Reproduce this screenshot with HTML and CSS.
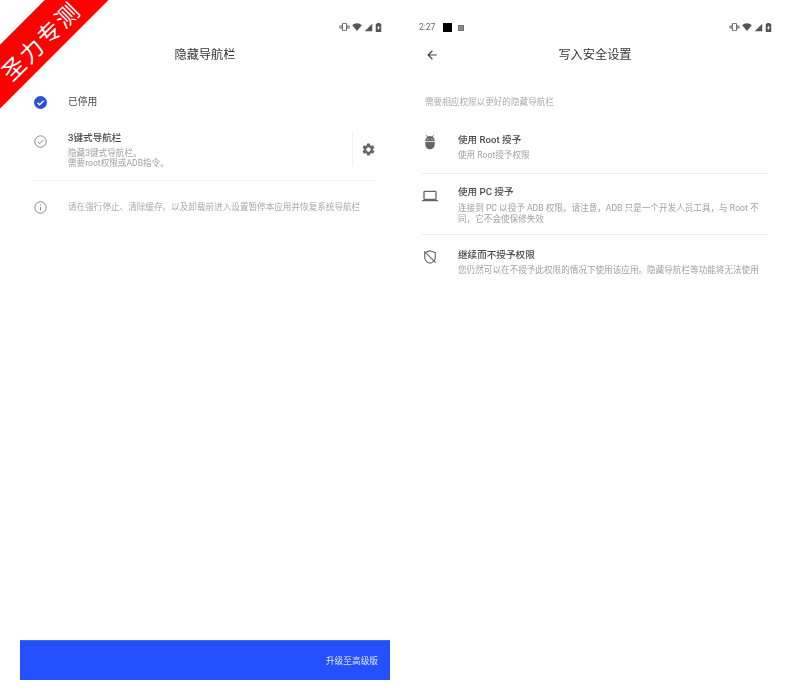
FILE: index.html
```html
<!DOCTYPE html>
<html lang="zh-CN">
<head>
<meta charset="utf-8">
<title>隐藏导航栏</title>
<link rel="stylesheet" href="styles.css">
</head>
<body>
<svg class="defs" width="0" height="0" aria-hidden="true">
  <symbol id="vibrate" viewBox="0 0 24 24"><path d="M0 15h2V9H0v6zm3 2h2V7H3v10zm19-8v6h2V9h-2zm-3 8h2V7h-2v10zM16.5 3h-9C6.67 3 6 3.67 6 4.5v15c0 .83.67 1.5 1.5 1.5h9c.83 0 1.5-.67 1.5-1.5v-15c0-.83-.67-1.5-1.5-1.5zM16 19H8V5h8v14z"/></symbol>
  <symbol id="wifi" viewBox="0 0 24 24"><path d="M12 21.5 0.5 8C3.5 5 7.5 3.2 12 3.2S20.500 5 23.500 8z"/></symbol>
  <symbol id="signal" viewBox="0 0 24 24"><path d="M2 22 22 2v20z"/></symbol>
  <symbol id="battery" viewBox="0 0 24 24"><path fill-rule="evenodd" d="M9 2h6v2h3v18H6V4h3zM12.500 7 9 14h2.500v4L15 11h-2.500z"/></symbol>
</svg>
<main class="screens">
  <section class="phone">
    <header class="status status-end">
      <span class="status-icons">
        <svg class="si si-vib"><use href="#vibrate"/></svg>
        <svg class="si"><use href="#wifi"/></svg>
        <svg class="si si-sig"><use href="#signal"/></svg>
        <svg class="si si-bat"><use href="#battery"/></svg>
      </span>
    </header>
    <div class="appbar"><h1 class="title">隐藏导航栏</h1></div>
    <div class="option option-selected">
      <svg class="ic ic-blue" viewBox="0 0 24 24"><circle cx="12" cy="12" r="12"/><path class="tick-w" d="M6.500 12.500l3.800 3.800 7.500-7.500"/></svg>
      <span class="row-title plain">已停用</span>
    </div>
    <div class="option option-nav">
      <svg class="ic ic-line ic-check" viewBox="0 0 24 24"><circle cx="12" cy="12" r="10.500"/><path d="M7 12.500l3.500 3.500 6.800-7"/></svg>
      <div class="nav-text">
        <div class="row-title">3键式导航栏</div>
        <p class="sub">隐藏3键式导航栏。<br>需要root权限或ADB指令。</p>
      </div>
      <div class="gear-cell">
        <svg class="gear" viewBox="0 0 24 24"><path d="M19.140 12.940c.04-.3.060-.61.060-.94 0-.32-.020-.64-.070-.94l2.030-1.580c.18-.14.230-.41.120-.61l-1.920-3.320c-.12-.22-.37-.29-.59-.22l-2.390.96c-.5-.38-1.030-.7-1.620-.94l-.36-2.540c-.04-.24-.24-.41-.48-.41h-3.840c-.24 0-.43.17-.47.41l-.36 2.540c-.59.24-1.130.57-1.620.94l-2.390-.96c-.22-.08-.47 0-.59.22L2.740 8.870c-.12.21-.080.47.12.61l2.030 1.580c-.05.3-.09.63-.09.94s.02.64.07.94l-2.030 1.580c-.18.14-.23.41-.12.61l1.920 3.320c.12.22.37.29.59.22l2.390-.96c.5.38 1.030.7 1.620.94l.36 2.540c.05.24.24.41.48.41h3.840c.24 0 .44-.17.47-.41l.36-2.540c.59-.24 1.130-.56 1.620-.94l2.390.96c.22.080.47 0 .59-.22l1.920-3.320c.12-.22.070-.47-.12-.61l-2.010-1.580zM12 15.600c-1.980 0-3.600-1.620-3.600-3.600s1.620-3.600 3.600-3.600 3.600 1.620 3.600 3.600-1.620 3.600-3.600 3.600z"/></svg>
      </div>
    </div>
    <hr class="rule rule-left">
    <div class="option option-info">
      <svg class="ic ic-line ic-info" viewBox="0 0 24 24"><circle cx="12" cy="12" r="10.500"/><path d="M12 11v6.500M12 6.500v2"/></svg>
      <p class="sub sub-info">请在强行停止、清除缓存、以及卸载前进入设置暂停本应用并恢复系统导航栏</p>
    </div>
    <div class="upgrade"><span class="upgrade-text">升级至高级版</span></div>
  </section>

  <section class="phone">
    <header class="status">
      <span class="clock">2:27</span>
      <span class="notif-black"></span>
      <span class="notif-small"></span>
      <span class="status-icons status-push">
        <svg class="si si-vib"><use href="#vibrate"/></svg>
        <svg class="si"><use href="#wifi"/></svg>
        <svg class="si si-sig"><use href="#signal"/></svg>
        <svg class="si si-bat"><use href="#battery"/></svg>
      </span>
    </header>
    <div class="appbar">
      <svg class="back" viewBox="0 0 24 24"><path d="M20 11H7.830l5.590-5.590L12 4l-8 8 8 8 1.410-1.410L7.830 13H20v-2z"/></svg>
      <h1 class="title">写入安全设置</h1>
    </div>
    <p class="sub lead">需要相应权限以更好的隐藏导航栏</p>
    <div class="perm perm-root">
      <svg class="pic pic-root" viewBox="0 0 24 24"><path d="M5 16c0 3.870 3.130 7 7 7s7-3.130 7-7v-4H5v4zM16.120 4.370l2.100-2.100-.82-.83-2.300 2.310C14.160 3.280 13.120 3 12 3s-2.160.28-3.090.75L6.600 1.440l-.82.83 2.100 2.100C6.140 5.640 5 7.680 5 10v1h14v-1c0-2.320-1.140-4.360-2.880-5.630zM9 9c-.55 0-1-.45-1-1s.45-1 1-1 1 .45 1 1-.45 1-1 1zm6 0c-.55 0-1-.45-1-1s.45-1 1-1 1 .45 1 1-.45 1-1 1z"/></svg>
      <div>
        <div class="row-title">使用 Root 授予</div>
        <p class="sub">使用 Root授予权限</p>
      </div>
    </div>
    <hr class="rule">
    <div class="perm perm-pc">
      <svg class="pic pic-laptop" viewBox="0 0 24 24"><path d="M20 18c1.100 0 1.990-.9 1.990-2L22 6c0-1.100-.9-2-2-2H4c-1.100 0-2 .9-2 2v10c0 1.100.9 2 2 2H0v2h24v-2h-4zM4 6h16v10H4V6z"/></svg>
      <div>
        <div class="row-title">使用 PC 授予</div>
        <p class="sub">连接到 PC 以授予 ADB 权限。请注意，ADB 只是一个开发人员工具，与 Root 不同，它不会使保修失效</p>
      </div>
    </div>
    <hr class="rule">
    <div class="perm perm-skip">
      <svg class="pic pic-shield" viewBox="0 0 24 24"><path d="M12 2.500l8 3v6c0 4.800-3.200 8.500-8 10-4.800-1.500-8-5.200-8-10v-6zM3.500 3.500l17 17"/></svg>
      <div>
        <div class="row-title">继续而不授予权限</div>
        <p class="sub">您仍然可以在不授予此权限的情况下使用该应用。隐藏导航栏等功能将无法使用</p>
      </div>
    </div>
  </section>
</main>
<div class="ribbon"><span class="ribbon-text">圣力专测</span></div>
</body>
</html>
```

FILE: styles.css
```css
* { box-sizing: border-box; }
html, body { margin: 0; padding: 0; background: #fff; overflow: hidden; }
body {
  width: 800px;
  height: 700px;
  position: relative;
  font-family: "Roboto", "Noto Sans CJK SC", sans-serif;
  color: #333;
}
.defs { position: absolute; }
.screens {
  display: flex;
  gap: 20px;
  padding: 0 20px;
  height: 680px;
  filter: blur(0.55px);
}
.phone {
  width: 370px;
  height: 680px;
  display: flex;
  flex-direction: column;
}
.status {
  height: 40px;
  padding: 21px 9px 0;
  display: flex;
  align-items: flex-start;
}
.status-end { justify-content: flex-end; }
.status-push { margin-left: auto; }
.status-icons { display: flex; align-items: center; gap: 2px; height: 12px; color: #666; }
.si { width: 10px; height: 10px; fill: #555; }
.si-vib { width: 11px; }
.si-sig { width: 9px; height: 9px; }
.si-bat { width: 11px; height: 11px; margin: 0 -3px 0 -2px; }
.clock { font-size: 8.500px; line-height: 12px; color: #666; width: 24px; }
.notif-black { width: 9px; height: 9px; background: #000; margin-top: 2px; }
.notif-small { width: 6px; height: 6px; background: #888; border: 1.500px solid #777; margin: 3.500px 0 0 6px; }

.appbar {
  height: 30px;
  display: flex;
  align-items: center;
  justify-content: center;
  position: relative;
}
.title { margin: 0; font-size: 12.200px; font-weight: 400; color: #333; line-height: 30px; }
.back { position: absolute; left: 15px; top: 8px; width: 14px; height: 14px; fill: #444; }

.option { display: flex; padding: 0 12px 0 13.500px; }
.ic { width: 13px; height: 13px; flex: none; }
.ic-blue { fill: #2a52d8; }
.tick-w { fill: none; stroke: #fff; stroke-width: 2.600; }
.ic-line { fill: none; stroke: #777; stroke-width: 1.600; }
.option-selected { margin-top: 25px; align-items: center; height: 14px; gap: 21.500px; }
.option-nav { margin-top: 17px; height: 43px; gap: 21.500px; align-items: flex-start; padding-top: 8px; }
.ic-check { margin-top: 0.500px; }
.nav-text { flex: 1; margin-top: -3px; }
.gear-cell {
  width: 26px;
  height: 34px;
  margin: -2px 0 0 0;
  border-left: 1px solid #f2f2f2;
  display: flex;
  align-items: center;
  justify-content: center;
}
.gear { width: 15px; height: 15px; fill: #666; margin-left: 5px; }

.row-title { font-size: 9.600px; line-height: 14px; font-weight: 500; color: #4a4a4a; }
.row-title.plain { font-size: 9.800px; font-weight: 400; }
.sub { margin: 0; font-size: 8.600px; line-height: 11px; color: #a0a0a0; }
.nav-text .sub { margin-top: 2.500px; line-height: 10.500px; }

.rule { border: 0; border-top: 1px solid #ededed; margin: 0 12px; height: 0; flex: none; }
.rule-left { margin-top: 11px; border-top-color: #f4f4f4; }
.option-info { margin-top: 19px; gap: 21.500px; align-items: center; height: 14px; }
.sub-info { color: #aaa; white-space: nowrap; }

.upgrade {
  margin-top: auto;
  height: 40px;
  background: #2450ff;
  border-top: 1px solid #4a6be0;
  display: flex;
  align-items: center;
  justify-content: flex-end;
  padding-right: 12px;
}
.upgrade-text { font-size: 8.700px; color: #dfe6ff; }

.lead { margin: 26px 0 0 15px; color: #aaa; line-height: 12px; }
.perm { display: flex; padding: 0 12px; gap: 20px; }
.perm > div { flex: 1; }
.perm .sub { margin-top: 3.500px; }
.perm-root { margin-top: 24.500px; padding-bottom: 12px; }
.perm-pc { padding-top: 11px; padding-bottom: 9.500px; }
.perm-skip { padding-top: 12.500px; }
.pic { width: 16px; height: 16px; flex: none; fill: #666; }
.pic-root { margin-top: 1.500px; }
.pic-laptop { margin-top: 3px; }
.pic-shield { fill: none; stroke: #666; stroke-width: 1.700; margin-top: 1.500px; }

.ribbon {
  position: absolute;
  left: -61.750px;
  top: 16px;
  width: 200px;
  height: 44.500px;
  padding-top: 6px;
  background: #ff0000;
  transform: rotate(-45deg);
  display: flex;
  align-items: center;
  justify-content: center;
}
.ribbon-text { color: #fff; font-size: 23px; letter-spacing: 2px; line-height: 1; font-family: "Noto Sans CJK SC", sans-serif; font-weight: 400; }
```
